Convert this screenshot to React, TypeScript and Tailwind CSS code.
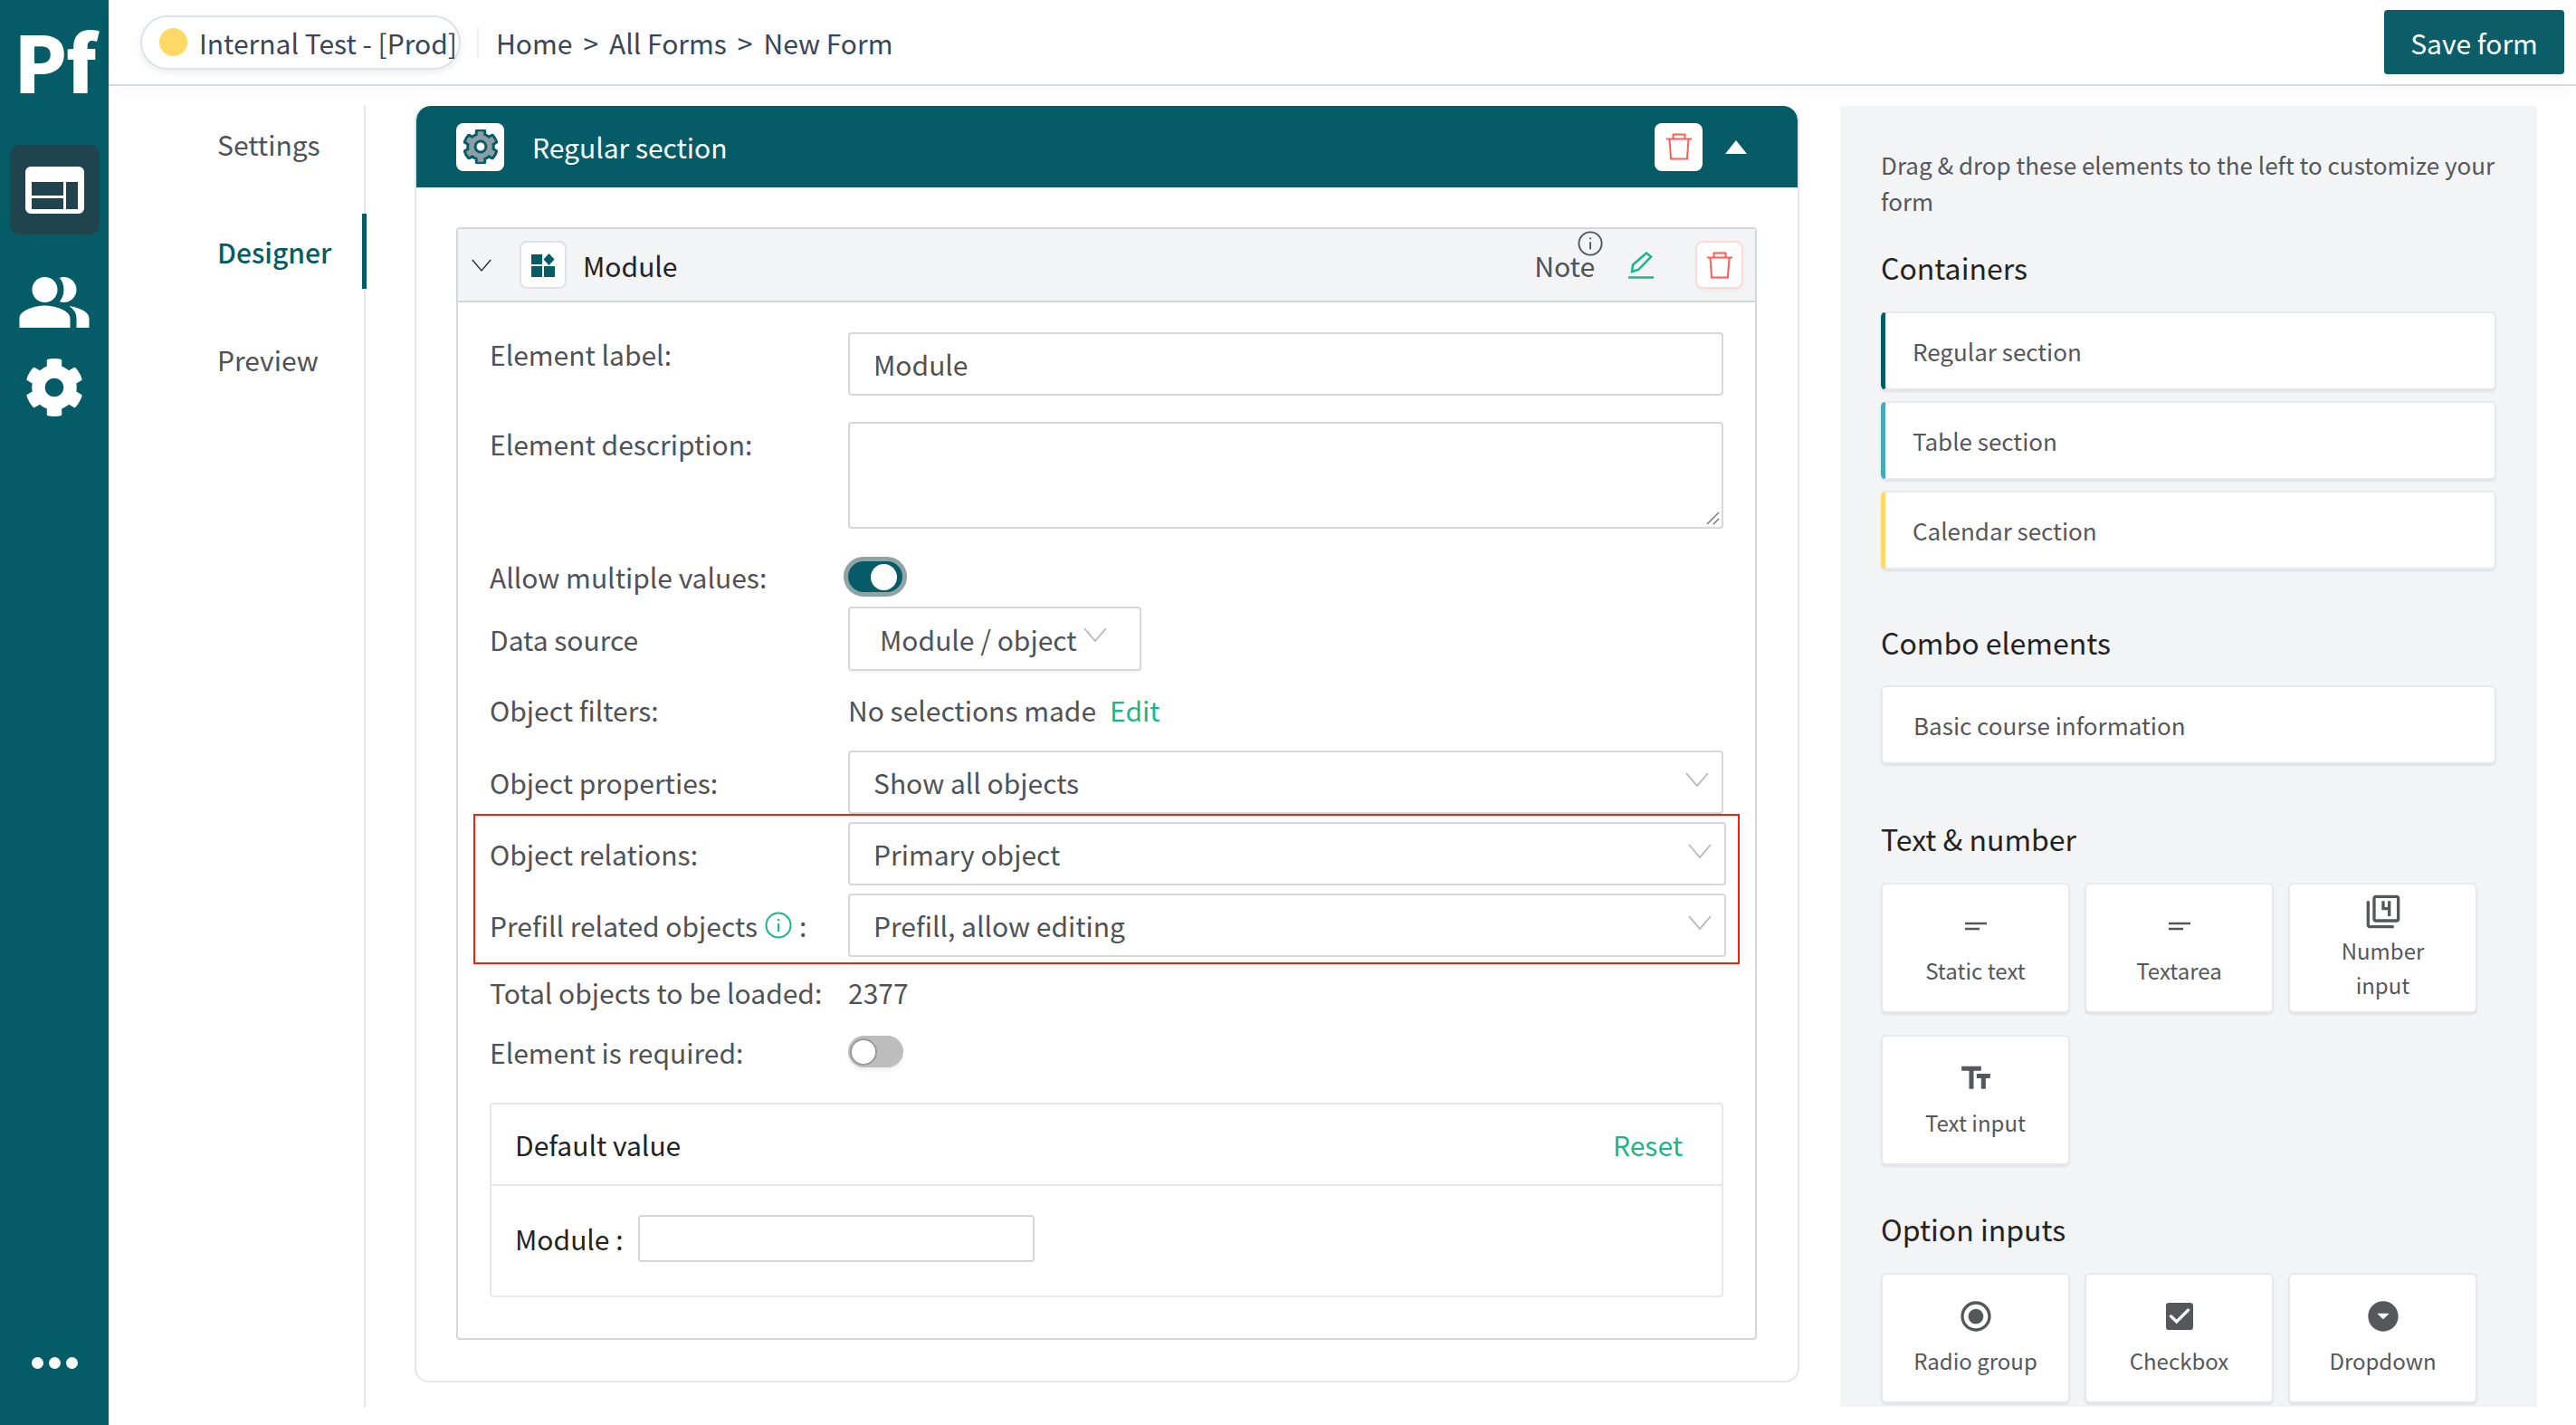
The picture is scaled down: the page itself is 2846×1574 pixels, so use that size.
import React from 'react';
import { FaCog } from 'react-icons/fa';
import {
  MdArrowDropDownCircle,
  MdCheckBox,
  MdOutlineFilter4,
  MdPeopleAlt,
  MdRadioButtonChecked,
  MdTextFields,
} from 'react-icons/md';

const FONT = '[font-family:"Noto_Sans_CJK_JP","Noto_Sans",sans-serif]';

const Trash = ({ className }: { className: string }) => (
  <svg className={className} viewBox="0 0 32 32" fill="none" stroke="#ff5c54" strokeWidth="2">
    <path d="M2 7.5h28" />
    <path d="M9.5 7V2.5h13V7" />
    <path d="M5.5 8l1.6 21.5h17.8L26.500 8" />
  </svg>
);

const Chevron = ({ className }: { className: string }) => (
  <svg className={className} viewBox="0 0 26 16" fill="none" stroke="currentColor" strokeWidth="1.8">
    <path d="M1 1l12 14L25 1" />
  </svg>
);

const Info = ({ className }: { className: string }) => (
  <svg className={className} viewBox="0 0 30 30" fill="none" stroke="currentColor" strokeWidth="2">
    <circle cx="15" cy="15" r="13.500" />
    <path d="M15 13v9" />
    <path d="M15 8v2" />
  </svg>
);

const SelectBox = ({ text }: { text: string }) => (
  <div className="flex h-[70px] flex-1 items-center justify-between rounded-[4px] border-2 border-[#d6d7d9] bg-white pl-[26px] pr-[14px]">
    <span>{text}</span>
    <Chevron className="mb-[6px] h-[16px] w-[26px] text-[#b4b6b9]" />
  </div>
);

const Row = ({ label, height, children }: { label: React.ReactNode; height: string; children: React.ReactNode }) => (
  <div className={`flex items-center ${height}`}>
    <div className="w-[396px] shrink-0">{label}</div>
    {children}
  </div>
);

const ListCard = ({ text, accent }: { text: string; accent: string }) => (
  <div className={`flex h-[87px] items-center rounded-[6px] border-2 border-l-[5px] border-[#e6e8ec] ${accent} bg-white pl-[30px] text-[26px] text-[#55575b] shadow-[0_2px_2px_#dfe2e8]`}>
    {text}
  </div>
);

const Tile = ({ icon, text }: { icon: React.ReactNode; text: React.ReactNode }) => (
  <div className="flex h-[144px] w-[209px] flex-col items-center justify-center rounded-[6px] border-2 border-[#e6e8ec] bg-white text-center text-[24px] leading-[38px] text-[#55575b] shadow-[0_2px_2px_#dfe2e8]">
    {icon}
    <div className="mt-[10px]">{text}</div>
  </div>
);

const Lines = () => (
  <svg className="h-[40px] w-[40px]" viewBox="0 0 40 40" fill="none" stroke="#55575b" strokeWidth="2.500">
    <path d="M8 17h24" />
    <path d="M8 23h16" />
  </svg>
);

export default function App() {
  return (
    <div className={`flex h-[1574px] w-[2846px] overflow-hidden bg-white text-[30px] leading-[40px] text-[#4f5256] ${FONT}`}>
      <aside className="flex w-[120px] shrink-0 flex-col items-center bg-[#055c66] text-white">
        <div className="mt-[24px] h-[84px] text-[86px] font-black leading-[84px] tracking-[-2px] text-white">Pf</div>
        <div className="mt-[52px] flex h-[99px] w-[99px] items-center justify-center rounded-[10px] bg-[#1f4450]">
          <svg className="h-[52px] w-[65px]" viewBox="0 0 65 52">
            <path
              fill="#fff"
              fillRule="evenodd"
              d="M6 0h53a6 6 0 0 1 6 6v40a6 6 0 0 1-6 6H6a6 6 0 0 1-6-6V6a6 6 0 0 1 6-6zM7 17v15h35V17zM7 35v12h35V35zM45 17v30h13V17z"
            />
          </svg>
        </div>
        <MdPeopleAlt className="mt-[33px] h-[84px] w-[84px]" />
        <FaCog className="mt-[19px] h-[66px] w-[66px]" />
        <div className="mt-auto mb-[62px] flex gap-[6px]">
          <span className="h-[13px] w-[13px] rounded-full bg-white" />
          <span className="h-[13px] w-[13px] rounded-full bg-white" />
          <span className="h-[13px] w-[13px] rounded-full bg-white" />
        </div>
      </aside>

      <div className="flex min-w-0 flex-1 flex-col">
        <header className="z-10 flex h-[95px] shrink-0 items-center border-b-2 border-[#d5d9e0] bg-white pl-[35px] pr-[13px] shadow-[0_4px_16px_rgba(0,0,0,0.03)]">
          <div className="flex h-[60px] w-[354px] items-center rounded-full border-2 border-[#dde1e8] pl-[19px] text-[#3a4656] shadow-[0_3px_8px_rgba(0,0,0,0.08)]">
            <span className="h-[31px] w-[31px] rounded-full bg-[#ffd966]" />
            <span className="ml-[13px]">Internal Test - [Prod]</span>
          </div>
          <div className="ml-[18px] h-[32px] w-[2px] bg-[#eceef1]" />
          <nav className="ml-[19px] flex gap-[12px] text-[#3a4656]">
            <span>Home</span>
            <span>&gt;</span>
            <span>All Forms</span>
            <span>&gt;</span>
            <span>New Form</span>
          </nav>
          <button className="ml-auto h-[71px] w-[199px] rounded-[4px] bg-[#0b5e67] text-white shadow-[0_3px_3px_rgba(0,0,0,0.05)]">
            Save form
          </button>
        </header>

        <div className="flex min-h-0 flex-1 pb-[20px] pt-[22px]">
          <nav className="relative flex w-[284px] shrink-0 flex-col border-r-2 border-[#e3e5e9] pl-[120px] pt-[22px]">
            <div className="flex h-[40px] items-center">Settings</div>
            <div className="mt-[79px] flex h-[40px] items-center font-medium text-[#055c66]">Designer</div>
            <div className="mt-[79px] flex h-[40px] items-center">Preview</div>
            <span className="absolute right-[-3px] top-[119px] h-[83px] w-[5px] bg-[#055c66]" />
          </nav>

          <main className="ml-[54px] h-[1410px] w-[1530px] shrink-0 overflow-hidden rounded-[16px] border-2 border-t-0 border-[#e3e5e9] bg-white">
            <div className="flex h-[90px] items-center rounded-t-[16px] bg-[#055c66] pl-[44px] pr-[56px] text-white">
              <div className="flex h-[53px] w-[53px] items-center justify-center rounded-[8px] bg-white">
                <FaCog className="h-[38px] w-[38px] stroke-[#055c66] stroke-[40px] text-[#8c9ea3]" />
              </div>
              <span className="ml-[31px]">Regular section</span>
              <div className="ml-auto flex h-[53px] w-[53px] items-center justify-center rounded-[8px] bg-white">
                <Trash className="h-[32px] w-[32px]" />
              </div>
              <div className="ml-[25px] h-0 w-0 border-x-[12px] border-b-[15px] border-x-transparent border-b-white" />
            </div>

            <section className="ml-[44px] mt-[44px] h-[1229px] w-[1437px] rounded-[4px] border-2 border-[#d4d6d9]">
              <div className="flex h-[81px] items-center border-b-2 border-[#d4d6d9] bg-[#f3f4f6] pl-[15px] pr-[13px] text-[#222]">
                <Chevron className="h-[18px] w-[22px] text-[#333]" />
                <div className="ml-[31px] flex h-[53px] w-[52px] items-center justify-center rounded-[8px] border-2 border-[#dde1e8] bg-white">
                  <svg className="h-[26px] w-[26px]" viewBox="0 0 26 26" fill="#055c66">
                    <rect x="0" y="1" width="12" height="11" />
                    <path d="M19.500 0l6 6.500-6 6.500-6-6.500z" />
                    <rect x="0" y="14" width="12" height="12" />
                    <rect x="14" y="14" width="12" height="12" />
                  </svg>
                </div>
                <span className="ml-[18px]">Module</span>
                <div className="relative ml-auto text-[#4f5256]">
                  Note
                  <Info className="absolute right-[-9px] top-[-18px] h-[28px] w-[28px] text-[#4f5256]" />
                </div>
                <svg className="ml-[37px] h-[30px] w-[28px]" viewBox="0 0 28 30" fill="none" stroke="#1db58c" strokeWidth="2.500">
                  <path d="M20 1.500l5 4-14 14.500-7 2 1-7.500z" />
                  <path d="M0 28.500h28" />
                </svg>
                <div className="ml-[46px] flex h-[53px] w-[53px] items-center justify-center rounded-[8px] border-2 border-[#ffd9d6] bg-white shadow-[0_3px_3px_rgba(0,0,0,0.03)]">
                  <Trash className="h-[32px] w-[32px]" />
                </div>
              </div>

              <div className="px-[35px] pt-[33px]">
                <div className="flex h-[70px]">
                  <div className="w-[396px] shrink-0 pt-[4px]">Element label:</div>
                  <div className="flex flex-1 items-center rounded-[4px] border-2 border-[#d6d7d9] pl-[26px]">Module</div>
                </div>
                <div className="mt-[29px] flex h-[118px]">
                  <div className="w-[396px] shrink-0 pt-[4px]">Element description:</div>
                  <div className="relative flex-1 rounded-[4px] border-2 border-[#d6d7d9]">
                    <svg className="absolute bottom-[2px] right-[2px] h-[16px] w-[16px]" viewBox="0 0 16 16" stroke="#777" strokeWidth="1.500">
                      <path d="M2 15L15 2" />
                      <path d="M9 15l6-6" />
                    </svg>
                  </div>
                </div>
                <Row
                  height="mt-[31px] h-[44px]"
                  label="Allow multiple values:"
                >
                  <div className="ml-[-5px] flex h-[44px] w-[70px] items-center justify-end rounded-full border-[5px] border-[#8fa3a5] bg-[#055c66] pr-[6px]">
                    <span className="h-[29px] w-[29px] rounded-full bg-white" />
                  </div>
                </Row>
                <Row height="mt-[11px] h-[71px]" label="Data source">
                  <div className="flex h-[71px] w-[324px] items-center justify-between rounded-[4px] border-2 border-[#d6d7d9] pl-[33px] pr-[36px] shadow-[0_3px_3px_rgba(0,0,0,0.04)]">
                    <span>Module / object</span>
                    <Chevron className="mb-[10px] h-[16px] w-[26px] text-[#b4b6b9]" />
                  </div>
                </Row>
                <Row height="mt-[23px] h-[40px]" label="Object filters:">
                  <span>No selections made</span>
                  <span className="ml-[15px] text-[#1db58c]">Edit</span>
                </Row>
                <Row height="mt-[25px] h-[69px]" label="Object properties:">
                  <SelectBox text="Show all objects" />
                </Row>

                <div className="mx-[-18px] mt-[1px] border-2 border-[#f0220c] py-[7px] pl-[16px] pr-[13px]">
                  <Row height="h-[69px]" label="Object relations:">
                    <SelectBox text="Primary object" />
                  </Row>
                  <Row
                    height="mt-[10px] h-[69px]"
                    label={
                      <span className="flex items-center">
                        Prefill related objects
                        <Info className="ml-[8px] h-[30px] w-[30px] text-[#1db58c]" />
                        <span className="ml-[8px]">:</span>
                      </span>
                    }
                  >
                    <SelectBox text="Prefill, allow editing" />
                  </Row>
                </div>

                <Row height="mt-[11px] h-[40px]" label="Total objects to be loaded:">
                  <span>2377</span>
                </Row>
                <Row height="mt-[28px] h-[35px]" label="Element is required:">
                  <div className="flex h-[35px] w-[61px] items-center rounded-full bg-[#bdbdbd] pl-[2px] shadow-[0_4px_4px_rgba(0,0,0,0.06)]">
                    <span className="h-[30px] w-[30px] rounded-full border-2 border-[#999] bg-white" />
                  </div>
                </Row>

                <div className="mt-[39px] h-[215px] rounded-[4px] border-2 border-[#e6e7e9]">
                  <div className="flex h-[90px] items-center justify-between border-b-2 border-[#e6e7e9] pl-[26px] pr-[43px] text-[#222]">
                    <span>Default value</span>
                    <span className="text-[#1db58c]">Reset</span>
                  </div>
                  <div className="flex items-center pl-[26px] pt-[32px] text-[#222]">
                    <span>Module :</span>
                    <div className="ml-[16px] h-[52px] w-[438px] rounded-[3px] border-2 border-[#d6d7d9]" />
                  </div>
                </div>
              </div>
            </section>
          </main>

          <aside className="ml-[45px] h-[1437px] w-[770px] shrink-0 overflow-hidden bg-[#f3f4f6] pl-[45px] pr-[45px] pt-[45px] text-[26px] text-[#55575b]">
            <p>Drag &amp; drop these elements to the left to customize your form</p>
            <h3 className="mt-[33px] text-[32px] leading-[40px] text-[#222]">Containers</h3>
            <div className="mt-[29px] flex flex-col gap-[12px]">
              <ListCard text="Regular section" accent="border-l-[#055c66]" />
              <ListCard text="Table section" accent="border-l-[#46aab8]" />
              <ListCard text="Calendar section" accent="border-l-[#ffd966]" />
            </div>
            <h3 className="mt-[60px] text-[32px] leading-[40px] text-[#222]">Combo elements</h3>
            <div className="mt-[28px] flex h-[87px] items-center rounded-[6px] border-2 border-[#e6e8ec] bg-white pl-[34px] text-[#55575b] shadow-[0_2px_2px_#dfe2e8]">
              Basic course information
            </div>
            <h3 className="mt-[62px] text-[32px] leading-[40px] text-[#222]">Text &amp; number</h3>
            <div className="mt-[29px] grid grid-cols-[209px_209px_209px] gap-x-[16px] gap-y-[24px]">
              <Tile icon={<Lines />} text="Static text" />
              <Tile icon={<Lines />} text="Textarea" />
              <Tile icon={<MdOutlineFilter4 className="mb-[-6px] h-[40px] w-[40px]" />} text={<>Number<br />input</>} />
              <Tile icon={<MdTextFields className="h-[40px] w-[40px]" />} text="Text input" />
            </div>
            <h3 className="mt-[50px] text-[32px] leading-[40px] text-[#222]">Option inputs</h3>
            <div className="mt-[29px] grid grid-cols-[209px_209px_209px] gap-x-[16px] gap-y-[24px]">
              <Tile icon={<MdRadioButtonChecked className="h-[40px] w-[40px]" />} text="Radio group" />
              <Tile icon={<MdCheckBox className="h-[40px] w-[40px]" />} text="Checkbox" />
              <Tile icon={<MdArrowDropDownCircle className="h-[40px] w-[40px]" />} text="Dropdown" />
              <Tile icon={<MdCheckBox className="h-[40px] w-[40px]" />} text="" />
            </div>
          </aside>
        </div>
      </div>
    </div>
  );
}
